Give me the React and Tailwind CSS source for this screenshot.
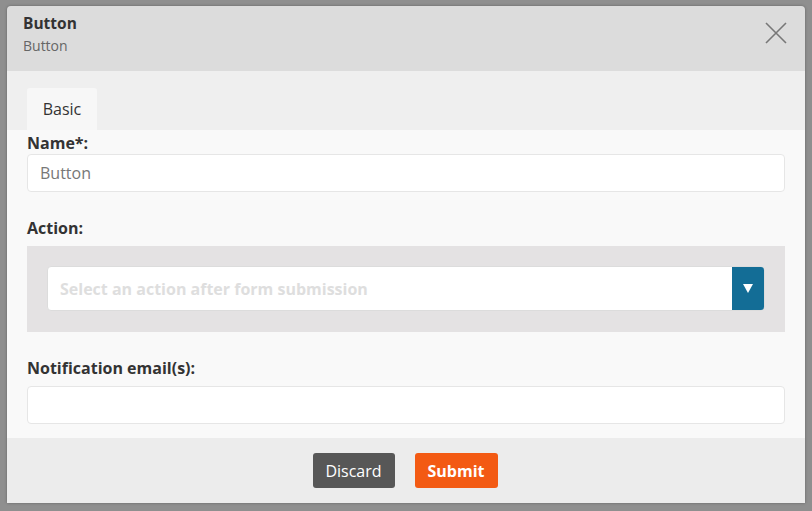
import React from 'react';

export default function App() {
  return (
    <div className="w-[812px] h-[511px] bg-[#8f8f8f] pt-[6px] pl-[7px] overflow-hidden" style={{ fontFamily: '"Open Sans", "Noto Sans", sans-serif' }}>
      <div className="w-[798px] h-[497px] flex flex-col rounded-t-[4px] overflow-hidden shadow-[0_0_3px_rgba(0,0,0,0.3)]">
        <div className="h-[65px] bg-[#dcdcdc] flex items-start justify-between px-[16px] pt-[7px] shrink-0">
          <div>
            <div className="text-[15.5px] font-bold text-[#333] leading-[20px]">Button</div>
            <div className="text-[14px] text-[#666] leading-[18px] mt-[4px]">Button</div>
          </div>
          <button className="mt-[9px] mr-[2px] text-[#777]">
            <svg width="22" height="22" viewBox="0 0 22 22" fill="none" stroke="currentColor" strokeWidth="1.6">
              <path d="M1 1L21 21M21 1L1 21" />
            </svg>
          </button>
        </div>

        <div className="h-[59px] bg-[#efefef] flex items-end px-[20px] shrink-0">
          <div className="w-[70px] h-[42px] bg-[#f7f7f7] rounded-t-[3px] flex items-center justify-center text-[16px] text-[#333]">
            Basic
          </div>
        </div>

        <div className="flex-1 bg-[#f9f9f9] px-[20px] pt-[3px]">
          <label className="block text-[16px] font-bold text-[#333] leading-[20px]">Name*:</label>
          <div className="mt-[1px] h-[38px] bg-white border border-[#e6e6e6] rounded-[4px] flex items-center px-[12px] text-[16px] text-[#777]">
            Button
          </div>

          <label className="block mt-[26px] text-[16px] font-bold text-[#333] leading-[20px]">Action:</label>
          <div className="mt-[8px] h-[86px] bg-[#e4e2e3] px-[20px] pt-[20px]">
            <div className="h-[45px] bg-white border border-[#dcdcdc] rounded-[4px] flex overflow-hidden">
              <div className="flex-1 flex items-center px-[12px] text-[16px] font-bold text-[#dedede]">
                Select an action after form submission
              </div>
              <div className="w-[32px] bg-[#136d96] flex items-center justify-center">
                <svg width="10" height="9" viewBox="0 0 10 9">
                  <path d="M0 0H10L5 9Z" fill="white" />
                </svg>
              </div>
            </div>
          </div>

          <label className="block mt-[26px] text-[16px] font-bold text-[#333] leading-[20px]">Notification email(s):</label>
          <div className="mt-[8px] h-[38px] bg-white border border-[#e6e6e6] rounded-[4px]" />
        </div>

        <div className="h-[65px] bg-[#ececec] flex items-center justify-center gap-[20px] pr-[2px] shrink-0">
          <button className="w-[82px] h-[35px] bg-[#575757] rounded-[3px] text-white text-[16px]">Discard</button>
          <button className="w-[83px] h-[35px] bg-[#f35a13] rounded-[3px] text-white text-[16px] font-bold">Submit</button>
        </div>
      </div>
    </div>
  );
}
